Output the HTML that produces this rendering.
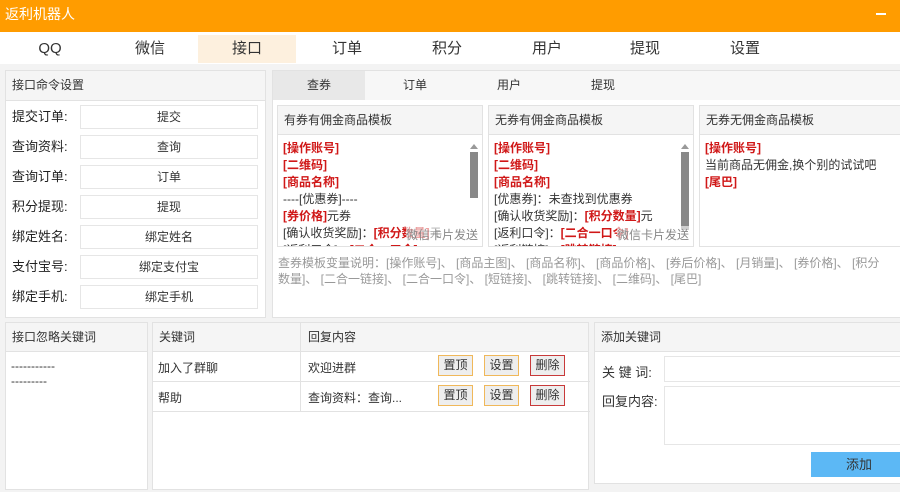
<!DOCTYPE html><html><head><meta charset="utf-8"><style>
*{margin:0;padding:0;box-sizing:border-box}
body{width:900px;height:492px;overflow:hidden;background:#f3f3f3;font-family:"Liberation Sans","Noto Sans CJK SC",sans-serif;font-size:12px;color:#333;position:relative}
.a{position:absolute}
.box{position:absolute;background:#fff;border:1px solid #e2e2e2}
.hd{position:absolute;left:0;right:0;top:0;background:#f5f5f5;border-bottom:1px solid #e2e2e2;padding-left:6px}
.nav{position:absolute;top:35px;height:28px;line-height:28px;font-size:15px;color:#333;width:98px;text-align:center}
.inp{position:absolute;left:80px;width:178px;height:24px;background:#fff;border:1px solid #e6e6e6;text-align:center;line-height:22px;font-size:12px}
.lbl{position:absolute;left:12px;font-size:13px;color:#222;line-height:16px}
.r{color:#d01818;font-weight:bold}
.tpl{position:absolute;top:105px;height:142px;background:#fff;border:1px solid #e2e2e2;overflow:hidden}
.tpl .hd{height:29px;line-height:28px;font-size:12px}
.tpl .c{position:absolute;top:34px;left:5px;line-height:17px;font-size:12px}
.sb{position:absolute;width:8px}
.btn{position:absolute;width:35px;height:21px;line-height:19px;text-align:center;background:#eee;border:1px solid #f0b85a;font-size:12px}
</style></head><body>
<div class="a" style="left:0;top:0;width:900px;height:32px;background:#ff9c00"></div>
<div class="a" style="left:5px;top:6px;color:#fff;font-size:14px;line-height:16px">返利机器人</div>
<div class="a" style="left:876px;top:13px;width:10px;height:2px;background:#fff"></div>
<div class="a" style="left:0;top:32px;width:900px;height:32px;background:#fff"></div>
<div class="a" style="left:198px;top:35px;width:98px;height:28px;background:#fdf0de"></div>
<div class="nav" style="left:1px">QQ</div><div class="nav" style="left:101px">微信</div><div class="nav" style="left:198px">接口</div><div class="nav" style="left:298px">订单</div><div class="nav" style="left:398px">积分</div><div class="nav" style="left:498px">用户</div><div class="nav" style="left:596px">提现</div><div class="nav" style="left:696px">设置</div>

<div class="box" style="left:5px;top:70px;width:261px;height:248px">
<div class="hd" style="height:30px;line-height:29px;">接口命令设置</div></div>
<div class="lbl" style="top:109px">提交订单:</div><div class="inp" style="top:105px">提交</div>
<div class="lbl" style="top:139px">查询资料:</div><div class="inp" style="top:135px">查询</div>
<div class="lbl" style="top:169px">查询订单:</div><div class="inp" style="top:165px">订单</div>
<div class="lbl" style="top:199px">积分提现:</div><div class="inp" style="top:195px">提现</div>
<div class="lbl" style="top:229px">绑定姓名:</div><div class="inp" style="top:225px">绑定姓名</div>
<div class="lbl" style="top:259px">支付宝号:</div><div class="inp" style="top:255px">绑定支付宝</div>
<div class="lbl" style="top:289px">绑定手机:</div><div class="inp" style="top:285px">绑定手机</div>

<div class="box" style="left:272px;top:70px;width:640px;height:248px;border-right:none"></div>
<div class="a" style="left:273px;top:71px;width:627px;height:29px;background:#f7f7f7"></div>
<div class="a" style="left:273px;top:71px;width:92px;height:29px;background:#e8e8e8;text-align:center;line-height:29px">查券</div>
<div class="a" style="left:365px;top:71px;width:100px;line-height:29px;text-align:center">订单</div>
<div class="a" style="left:459px;top:71px;width:100px;line-height:29px;text-align:center">用户</div>
<div class="a" style="left:553px;top:71px;width:100px;line-height:29px;text-align:center">提现</div>

<div class="tpl" style="left:277px;width:206px"><div class="hd">有券有佣金商品模板</div>
<div class="c"><span class="r">[操作账号]</span><br><span class="r">[二维码]</span><br><span class="r">[商品名称]</span><br>----[优惠券]----<br><span class="r">[券价格]</span>元券<br>[确认收货奖励]：<span class="r">[积分数量]</span>元<br>[返利口令]：<span class="r">[二合一口令]</span></div>
<div class="a" style="left:192px;top:38px;width:0;height:0;border-left:4px solid transparent;border-right:4px solid transparent;border-bottom:5px solid #999"></div>
<div class="sb" style="left:192px;height:46px;top:46px;background:#888"></div>
<div class="a" style="left:128px;top:120px;color:#888;background:rgba(255,255,255,.6)">微信卡片发送</div></div>
<div class="tpl" style="left:488px;width:206px"><div class="hd">无券有佣金商品模板</div>
<div class="c"><span class="r">[操作账号]</span><br><span class="r">[二维码]</span><br><span class="r">[商品名称]</span><br>[优惠券]：未查找到优惠券<br>[确认收货奖励]：<span class="r">[积分数量]</span>元<br>[返利口令]：<span class="r">[二合一口令]</span><br>[返利链接]：<span class="r">[跳转链接]</span></div>
<div class="a" style="left:192px;top:38px;width:0;height:0;border-left:4px solid transparent;border-right:4px solid transparent;border-bottom:5px solid #999"></div>
<div class="sb" style="left:192px;height:78px;top:46px;background:#888"></div>
<div class="a" style="left:128px;top:120px;color:#888;background:rgba(255,255,255,.6)">微信卡片发送</div></div>
<div class="tpl" style="left:699px;width:210px"><div class="hd">无券无佣金商品模板</div>
<div class="c"><span class="r">[操作账号]</span><br>当前商品无佣金,换个别的试试吧<br><span class="r">[尾巴]</span></div></div>
<div class="a" style="left:278px;top:255px;width:640px;color:#999;line-height:16px;font-size:12px">查券模板变量说明：[操作账号]、 [商品主图]、 [商品名称]、 [商品价格]、 [券后价格]、 [月销量]、 [券价格]、 [积分<br>数量]、 [二合一链接]、 [二合一口令]、 [短链接]、 [跳转链接]、 [二维码]、 [尾巴]</div>

<div class="box" style="left:5px;top:322px;width:143px;height:168px"><div class="hd" style="height:29px;line-height:28px">接口忽略关键词</div>
<div class="a" style="left:5px;top:36px;line-height:15px">-----------<br>---------</div></div>

<div class="box" style="left:152px;top:322px;width:437px;height:168px">
<div class="hd" style="height:29px;line-height:28px">关键词</div>
<div class="a" style="left:147px;top:0;width:1px;height:88px;background:#e2e2e2"></div>
<div class="a" style="left:155px;top:0;line-height:28px">回复内容</div>
<div class="a" style="left:0;top:58px;width:437px;height:1px;background:#e2e2e2"></div>
<div class="a" style="left:0;top:88px;width:437px;height:1px;background:#e2e2e2"></div>
<div class="a" style="left:5px;top:36px">加入了群聊</div><div class="a" style="left:155px;top:36px">欢迎进群</div>
<div class="a" style="left:5px;top:66px">帮助</div><div class="a" style="left:155px;top:66px">查询资料：查询...</div>
</div>
<div class="btn" style="left:438px;top:355px">置顶</div><div class="btn" style="left:484px;top:355px">设置</div><div class="btn" style="left:530px;top:355px;border-color:#c83a3a">删除</div>
<div class="btn" style="left:438px;top:385px">置顶</div><div class="btn" style="left:484px;top:385px">设置</div><div class="btn" style="left:530px;top:385px;border-color:#c83a3a">删除</div>

<div class="box" style="left:594px;top:322px;width:320px;height:162px"><div class="hd" style="height:29px;line-height:28px">添加关键词</div></div>
<div class="a" style="left:602px;top:362px;font-size:13px">关 键 词:</div>
<div class="a" style="left:664px;top:356px;width:240px;height:26px;background:#fff;border:1px solid #e6e6e6"></div>
<div class="a" style="left:602px;top:391px;font-size:13px">回复内容:</div>
<div class="a" style="left:664px;top:386px;width:240px;height:59px;background:#fff;border:1px solid #e6e6e6"></div>
<div class="a" style="left:811px;top:452px;width:95px;height:25px;background:#5cb8f5;line-height:25px;padding-left:35px;font-size:13px">添加</div>
</body></html>
